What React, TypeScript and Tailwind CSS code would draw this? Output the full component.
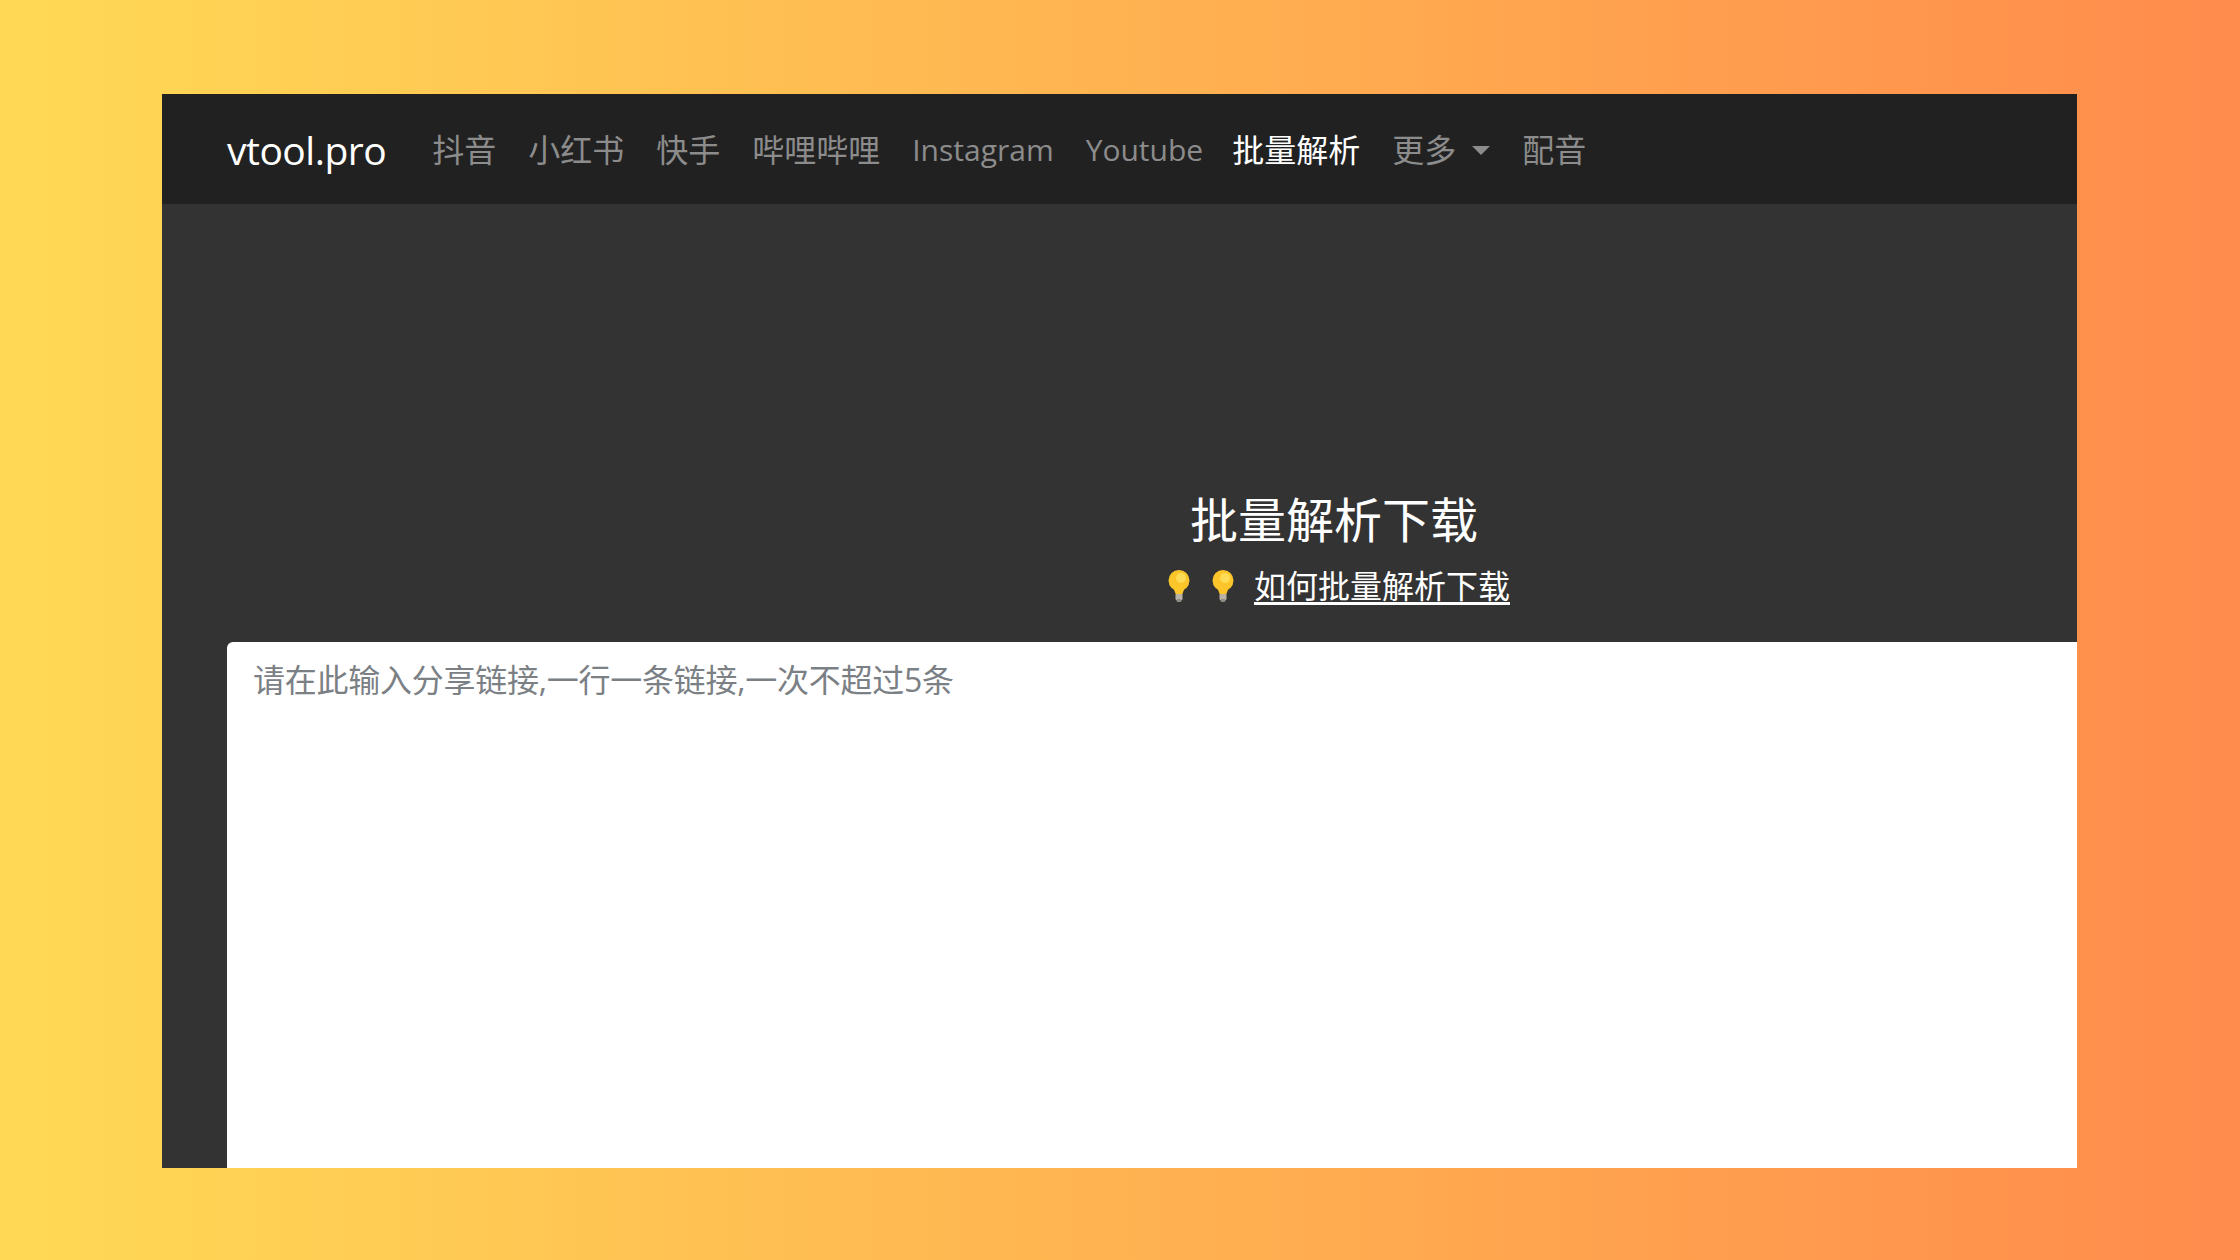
import React from 'react';

const navItems = ['抖音', '小红书', '快手', '哔哩哔哩'];

function Bulb() {
  return (
    <svg width="26" height="34" viewBox="0 0 26 34" className="shrink-0">
      <circle cx="13" cy="11.5" r="10.5" fill="#fcc62b" />
      <path d="M7 18 L10 26 H16 L19 18 Z" fill="#fcc62b" />
      <circle cx="15" cy="9" r="5" fill="#ffdc55" />
      <rect x="9.5" y="25" width="7" height="6" rx="1" fill="#b8b3a4" />
      <rect x="10.5" y="30" width="5" height="3" rx="1.5" fill="#8f8c84" />
    </svg>
  );
}

export default function App() {
  return (
    <div
      className="h-[1260px] w-[2240px] overflow-hidden bg-gradient-to-r from-[#ffd955] to-[#ff8b4c] pl-[162px] pt-[94px]"
      style={{ fontFamily: '"Open Sans", "Noto Sans CJK SC", sans-serif' }}
    >
      <div className="flex h-[1074px] w-[1915px] flex-col overflow-hidden bg-[#333333]">
        {/* Navbar */}
        <nav className="flex h-[110px] shrink-0 items-center bg-[#212121] pl-[65px]">
          <span className="mr-[46px] text-[39px] leading-none tracking-[-0.5px] text-white">vtool.pro</span>
          <div className="flex items-center gap-[32px] pt-[2px] text-[32px] leading-none text-[#8c8c8c]">
            {navItems.map((item) => (
              <span key={item}>{item}</span>
            ))}
            <span className="text-[30px]">Instagram</span>
            <span className="text-[30px]">Youtube</span>
            <span className="-ml-[3px] text-white">批量解析</span>
            <span className="flex items-center gap-[16px]">
              更多
              <span className="h-0 w-0 border-x-[9px] border-t-[9px] border-x-transparent border-t-[#8c8c8c]" />
            </span>
            <span>配音</span>
          </div>
        </nav>

        {/* Main */}
        <main className="w-[2279px] pl-[65px]">
          <div className="flex flex-col items-center pt-[287px]">
            <h1 className="text-[48px] leading-[58px] text-white">批量解析下载</h1>
            <div className="ml-[8px] mt-[13px] flex h-[48px] items-center gap-[18px]">
              <Bulb />
              <Bulb />
              <a className="text-[32px] leading-none text-white underline underline-offset-4">如何批量解析下载</a>
            </div>
          </div>
          <textarea
            className="mt-[32px] block h-[600px] w-full resize-none rounded-tl-[6px] bg-white px-[26px] py-[15px] text-[32px] leading-[46px] tracking-[-0.25px] placeholder:text-[#7b8085]"
            placeholder="请在此输入分享链接,一行一条链接,一次不超过5条"
          />
        </main>
      </div>
    </div>
  );
}
